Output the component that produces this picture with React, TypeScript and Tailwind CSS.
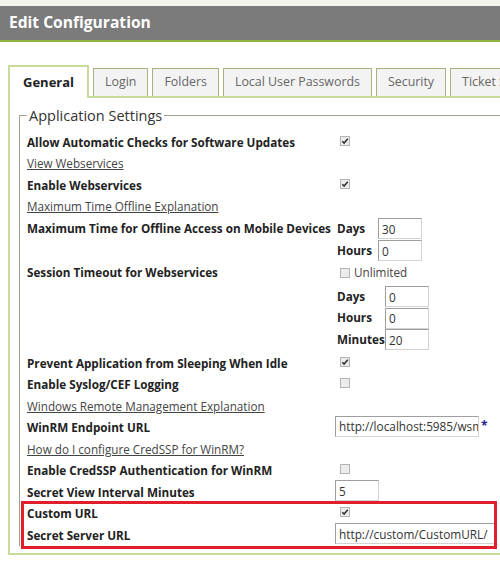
import React from "react"

function Check({ checked }: { checked?: boolean }) {
  return (
    <svg width="10" height="10" viewBox="0 0 10 10" className="block">
      <rect x="0.5" y="0.5" width="9" height="9" fill="#ececec" stroke="#b4b4b4" />
      {checked && (
        <path d="M2.3 5.2 L4.1 7 L7.8 2.8" fill="none" stroke="#333" strokeWidth="1.6" />
      )}
    </svg>
  )
}

function Field({ value, w }: { value: string; w: string }) {
  return (
    <input
      readOnly
      value={value}
      className={`${w} h-[21px] border border-[#d2d2d2] border-t-[#9e9e9e] border-l-[#9e9e9e] bg-white pl-[3px] text-[11.8px] text-[#333] outline-none`}
    />
  )
}

function Row({ label, link, children }: { label: string; link?: boolean; children?: React.ReactNode }) {
  return (
    <div className="flex h-[21.5px] items-center">
      <div className="w-[308px] shrink-0">
        {link ? (
          <span className="text-[11.7px] text-[#444] underline">{label}</span>
        ) : (
          <span className="text-[11.7px] font-bold text-[#222]">{label}</span>
        )}
      </div>
      {children}
    </div>
  )
}

function SubRow({ label, value, lw, h }: { label: string; value: string; lw: string; h: string }) {
  return (
    <div className={`flex ${h} items-center`}>
      <span className={`${lw} pl-[2px] text-[11.7px] font-bold text-[#222]`}>{label}</span>
      <Field value={value} w="w-[44px]" />
    </div>
  )
}

const tabs = ["Login", "Folders", "Local User Passwords", "Security", "Ticket System"]

export default function App() {
  return (
    <div className="h-[563px] w-[500px] overflow-hidden bg-white font-['Open_Sans',sans-serif]">
      <div className="h-[6px] bg-[#f3f5ec]" />
      <div className="flex h-[36px] items-center border-b-2 border-[#8fb440] bg-[#7b7b7b] px-[9px] text-[15.6px] font-bold text-white">
        Edit Configuration
      </div>

      <div className="w-[640px] pl-[8px] pt-[23px]">
        {/* tabs */}
        <div className="flex items-end gap-[4px]">
          <div className="relative z-10 -mb-[2px] flex h-[33px] items-center border-2 border-b-0 border-[#c8da9c] bg-white px-[13px] text-[13px] font-bold text-[#222]">
            General
          </div>
          {tabs.map((t) => (
            <div
              key={t}
              className="flex h-[28px] items-center border border-b-0 border-[#a8b27f] bg-[#f3f3f3] px-[11px] text-[12.4px] text-[#666]"
            >
              {t}
            </div>
          ))}
        </div>

        {/* panel */}
        <div className="border-2 border-r-0 border-[#c8da9c] pl-[9px] pt-[7px] pb-[7px]">
          <fieldset className="border-l border-t border-[#9ea58c] pl-[7px] pb-[2px]">
            <legend className="px-[2px] text-[14.5px] text-[#333]">Application Settings</legend>
            <div className="pt-[3px]">
              <Row label="Allow Automatic Checks for Software Updates">
                <span className="ml-[5px]"><Check checked /></span>
              </Row>
              <Row label="View Webservices" link />
              <Row label="Enable Webservices">
                <span className="ml-[5px]"><Check checked /></span>
              </Row>
              <Row label="Maximum Time Offline Explanation" link />

              <div className="flex items-start pt-[2px]">
                <div className="flex h-[22px] w-[308px] shrink-0 items-center text-[11.7px] font-bold text-[#222]">
                  Maximum Time for Offline Access on Mobile Devices
                </div>
                <div>
                  <SubRow label="Days" value="30" lw="w-[43px]" h="h-[22px]" />
                  <SubRow label="Hours" value="0" lw="w-[43px]" h="h-[22px]" />
                </div>
              </div>

              <div className="flex items-start">
                <div className="flex h-[22px] w-[308px] shrink-0 items-center text-[11.7px] font-bold text-[#222]">
                  Session Timeout for Webservices
                </div>
                <div>
                  <div className="flex h-[22px] items-center gap-[4px] pl-[5px] text-[11.7px] text-[#444]">
                    <Check />
                    Unlimited
                  </div>
                  <div className="pt-[2px]">
                    <SubRow label="Days" value="0" lw="w-[50px]" h="h-[22px]" />
                    <SubRow label="Hours" value="0" lw="w-[50px]" h="h-[21px]" />
                    <SubRow label="Minutes" value="20" lw="w-[50px]" h="h-[22px]" />
                  </div>
                </div>
              </div>

              <Row label="Prevent Application from Sleeping When Idle">
                <span className="ml-[5px]"><Check checked /></span>
              </Row>
              <Row label="Enable Syslog/CEF Logging">
                <span className="ml-[5px]"><Check /></span>
              </Row>
              <Row label="Windows Remote Management Explanation" link />
              <Row label="WinRM Endpoint URL">
                <Field value="http://localhost:5985/wsman" w="w-[144px]" />
                <span className="ml-[2px] text-[12px] font-bold text-[#23238e]">*</span>
              </Row>
              <Row label="How do I configure CredSSP for WinRM?" link />
              <Row label="Enable CredSSP Authentication for WinRM">
                <span className="ml-[5px]"><Check /></span>
              </Row>
              <Row label="Secret View Interval Minutes">
                <Field value="5" w="w-[44px]" />
              </Row>

              <div className="relative">
                <Row label="Custom URL">
                  <span className="ml-[5px]"><Check checked /></span>
                </Row>
                <Row label="Secret Server URL">
                  <Field value="http://custom/CustomURL/" w="w-[161px]" />
                </Row>
                <div className="absolute -left-[6px] top-0 h-[48px] w-[476px] border-[3px] border-[#e01f2b]" />
              </div>
            </div>
          </fieldset>
        </div>
      </div>
    </div>
  )
}
